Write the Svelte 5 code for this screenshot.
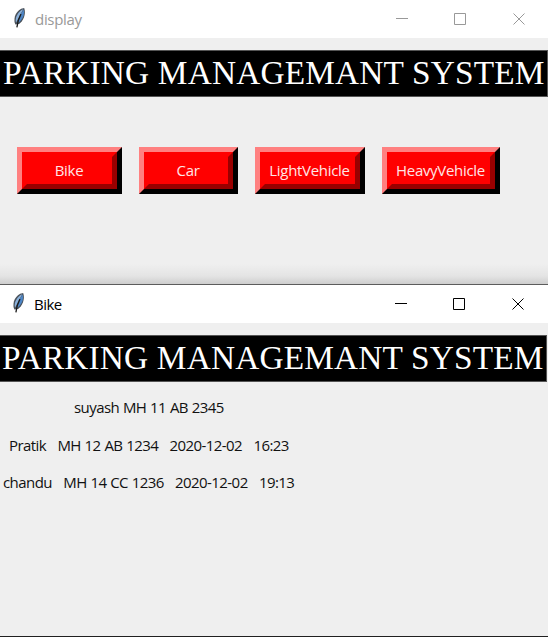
<script>
  const title = 'PARKING MANAGEMANT SYSTEM';
  const kinds = [
    { name: 'Bike', width: 105 },
    { name: 'Car', width: 99 },
    { name: 'LightVehicle', width: 110 },
    { name: 'HeavyVehicle', width: 118 },
  ];
  const rows = [
    { indent: 74, text: 'suyash MH 11 AB 2345' },
    { indent: 9, text: 'Pratik   MH 12 AB 1234   2020-12-02   16:23' },
    { indent: 3, text: 'chandu   MH 14 CC 1236   2020-12-02   19:13' },
  ];
</script>

{#snippet feather()}
  <svg class="feather" width="14" height="20" viewBox="0 0 14 20">
    <path d="M11.2 0L8.2 .8C5 2.6 2.6 5.6 1.9 8.6 1.2 12 1.2 14.3 2.4 16.4L6 16C10.2 13 13.4 6.4 11.2 0Z" fill="#4a525b" />
    <path d="M10.2 1.2C7.2 2.2 4 6 3 10 2.5 12 2.6 13.6 3.2 14.5L6.6 8Z" fill="#8ab0da" />
    <path d="M10.5 1.6C12.2 6.5 9.2 12.3 5.2 15L6.2 9Z" fill="#4c86c8" />
    <path d="M8 6C6.3 9.2 4.5 12.5 3.9 19.4" fill="none" stroke="#1a1a1a" stroke-width="1.3" />
  </svg>
{/snippet}

{#snippet titlebar(name)}
  <header class="bar">
    {@render feather()}
    <span class="name">{name}</span>
    <svg class="controls" width="130" height="12" viewBox="0 0 130 12" fill="none" stroke="currentColor">
      <path d="M0 5.5H12M58.5 .5H69.5V11.5H58.5Z" />
      <path d="M117.5 .5L128.5 11.5M128.5 .5L117.5 11.5" />
    </svg>
  </header>
{/snippet}

<main>
  <section class="window inactive">
    {@render titlebar('display')}
    <h1>{title}</h1>
    <div class="buttons">
      {#each kinds as kind}
        <button style="width: {kind.width}px"><span>{kind.name}</span></button>
      {/each}
    </div>
    <div class="shade"></div>
  </section>
  <section class="window active">
    {@render titlebar('Bike')}
    <h1>{title}</h1>
    <div class="rows">
      {#each rows as row}
        <p style="padding-left: {row.indent}px">{row.text}</p>
      {/each}
    </div>
  </section>
</main>

<style>
  :global(body) { margin: 0; }
  main {
    width: 548px;
    height: 637px;
    overflow: hidden;
    display: flex;
    flex-direction: column;
    font-family: 'Open Sans', 'Noto Sans', sans-serif;
  }
  .window {
    box-sizing: border-box;
    background: #efefef;
    display: flex;
    flex-direction: column;
  }
  .inactive { height: 284px; }
  .active {
    height: 353px;
    border-top: 1px solid #5c5c5c;
    border-bottom: 1px solid #202020;
  }
  .bar {
    height: 38px;
    flex: none;
    box-sizing: border-box;
    padding: 0 22px 0 13px;
    display: flex;
    align-items: center;
    background: #fff;
    color: #999;
    font-size: 15px;
  }
  .active .bar { color: #000; padding: 0 23px 0 12px; }
  .feather { margin: 0 8px 2px 0; }
  .name { letter-spacing: -0.3px; }
  .active .name { letter-spacing: -0.5px; }
  .controls { margin-left: auto; }
  h1 {
    margin: 12px 0 0;
    height: 47px;
    flex: none;
    box-sizing: border-box;
    border: 1px solid #555;
    border-width: 1px 1px 1px 0;
    background: #000;
    color: #fff;
    font: 400 33.33px/44px 'Liberation Serif', serif;
    letter-spacing: 0.18px;
    white-space: nowrap;
    padding-left: 3px;
  }
  .active h1 { margin-right: 1px; padding-left: 2px; }
  .buttons {
    display: flex;
    gap: 17px;
    padding: 50px 0 0 17px;
  }
  button {
    box-sizing: border-box;
    height: 47px;
    padding: 0;
    border: 5px solid;
    border-color: #ff8080 #000 #000 #ff8080;
    background: #f00;
    display: flex;
    font: 15px 'Open Sans', sans-serif;
    letter-spacing: -0.3px;
    color: #ffe6e6;
  }
  button span {
    flex: 1;
    min-width: 0;
    box-sizing: border-box;
    height: 37px;
    border: 5px solid;
    border-color: #f00 #900 #900 #f00;
    line-height: 26px;
    white-space: nowrap;
    display: flex;
    justify-content: center;
    padding-right: 1px;
  }
  .shade {
    margin-top: auto;
    height: 20px;
    background: linear-gradient(#efefef, #e4e4e4 60%, #cecece);
  }
  .rows { padding-top: 7px; }
  p {
    margin: 0;
    height: 37.5px;
    line-height: 37.5px;
    font-size: 15px;
    letter-spacing: -0.57px;
    word-spacing: 0.45px;
    color: #111;
    white-space: pre;
  }
</style>
